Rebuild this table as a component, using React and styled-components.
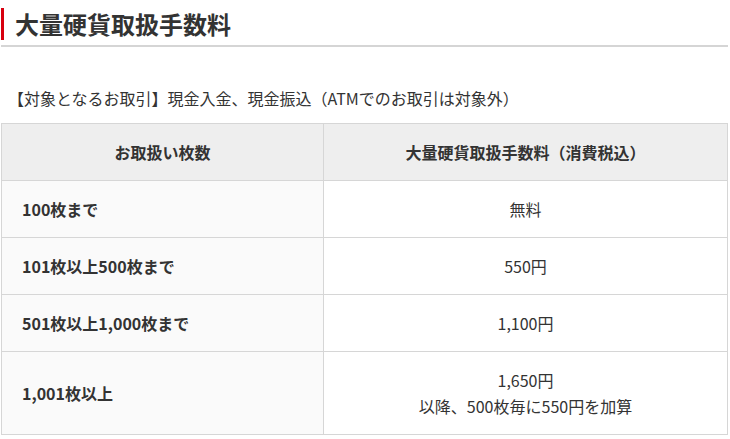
import React from 'react';
import styled, { createGlobalStyle } from 'styled-components';

const GlobalStyle = createGlobalStyle`
  body {
    margin: 0;
    background: #fff;
    color: #333;
    font-family: "Noto Sans CJK JP", "Noto Sans", sans-serif;
  }
`;

const Page = styled.div`
  width: 727px;
  margin-left: 1px;
`;

const HeadingWrap = styled.div`
  padding: 8px 0 5px;
  border-bottom: 2px solid #d5d5d5;
`;

const Heading = styled.h2`
  margin: 0;
  padding-left: 11px;
  border-left: 3px solid #d7000f;
  font-size: 24px;
  line-height: 32px;
  font-weight: 700;
  color: #333;
`;

const Intro = styled.p`
  margin: 38px 0 12px 7px;
  font-size: 16px;
  line-height: 26px;
`;

const Table = styled.table`
  width: 727px;
  border-collapse: collapse;
  font-size: 16px;
  line-height: 26px;
`;

const HeadCell = styled.th`
  background: #eeeeee;
  border: 1px solid #d6d6d6;
  padding: 15px;
  font-weight: 700;
  text-align: center;
  width: ${(p) => p.$w || 'auto'};
`;

const LabelCell = styled.td`
  background: #fafafa;
  border: 1px solid #d6d6d6;
  padding: 15px 20px;
  font-weight: 700;
  text-align: left;
`;

const ValueCell = styled.td`
  background: #fff;
  border: 1px solid #d6d6d6;
  padding: 15px;
  text-align: center;
`;

const rows = [
  { label: '100枚まで', value: ['無料'] },
  { label: '101枚以上500枚まで', value: ['550円'] },
  { label: '501枚以上1,000枚まで', value: ['1,100円'] },
  { label: '1,001枚以上', value: ['1,650円', '以降、500枚毎に550円を加算'] },
];

export default function App() {
  return (
    <Page>
      <GlobalStyle />
      <HeadingWrap>
        <Heading>大量硬貨取扱手数料</Heading>
      </HeadingWrap>
      <Intro>【対象となるお取引】現金入金、現金振込（ATMでのお取引は対象外）</Intro>
      <Table>
        <thead>
          <tr>
            <HeadCell $w="291px">お取扱い枚数</HeadCell>
            <HeadCell>大量硬貨取扱手数料（消費税込）</HeadCell>
          </tr>
        </thead>
        <tbody>
          {rows.map((r) => (
            <tr key={r.label}>
              <LabelCell>{r.label}</LabelCell>
              <ValueCell>
                {r.value.map((v, i) => (
                  <React.Fragment key={v}>
                    {i > 0 && <br />}
                    {v}
                  </React.Fragment>
                ))}
              </ValueCell>
            </tr>
          ))}
        </tbody>
      </Table>
    </Page>
  );
}
